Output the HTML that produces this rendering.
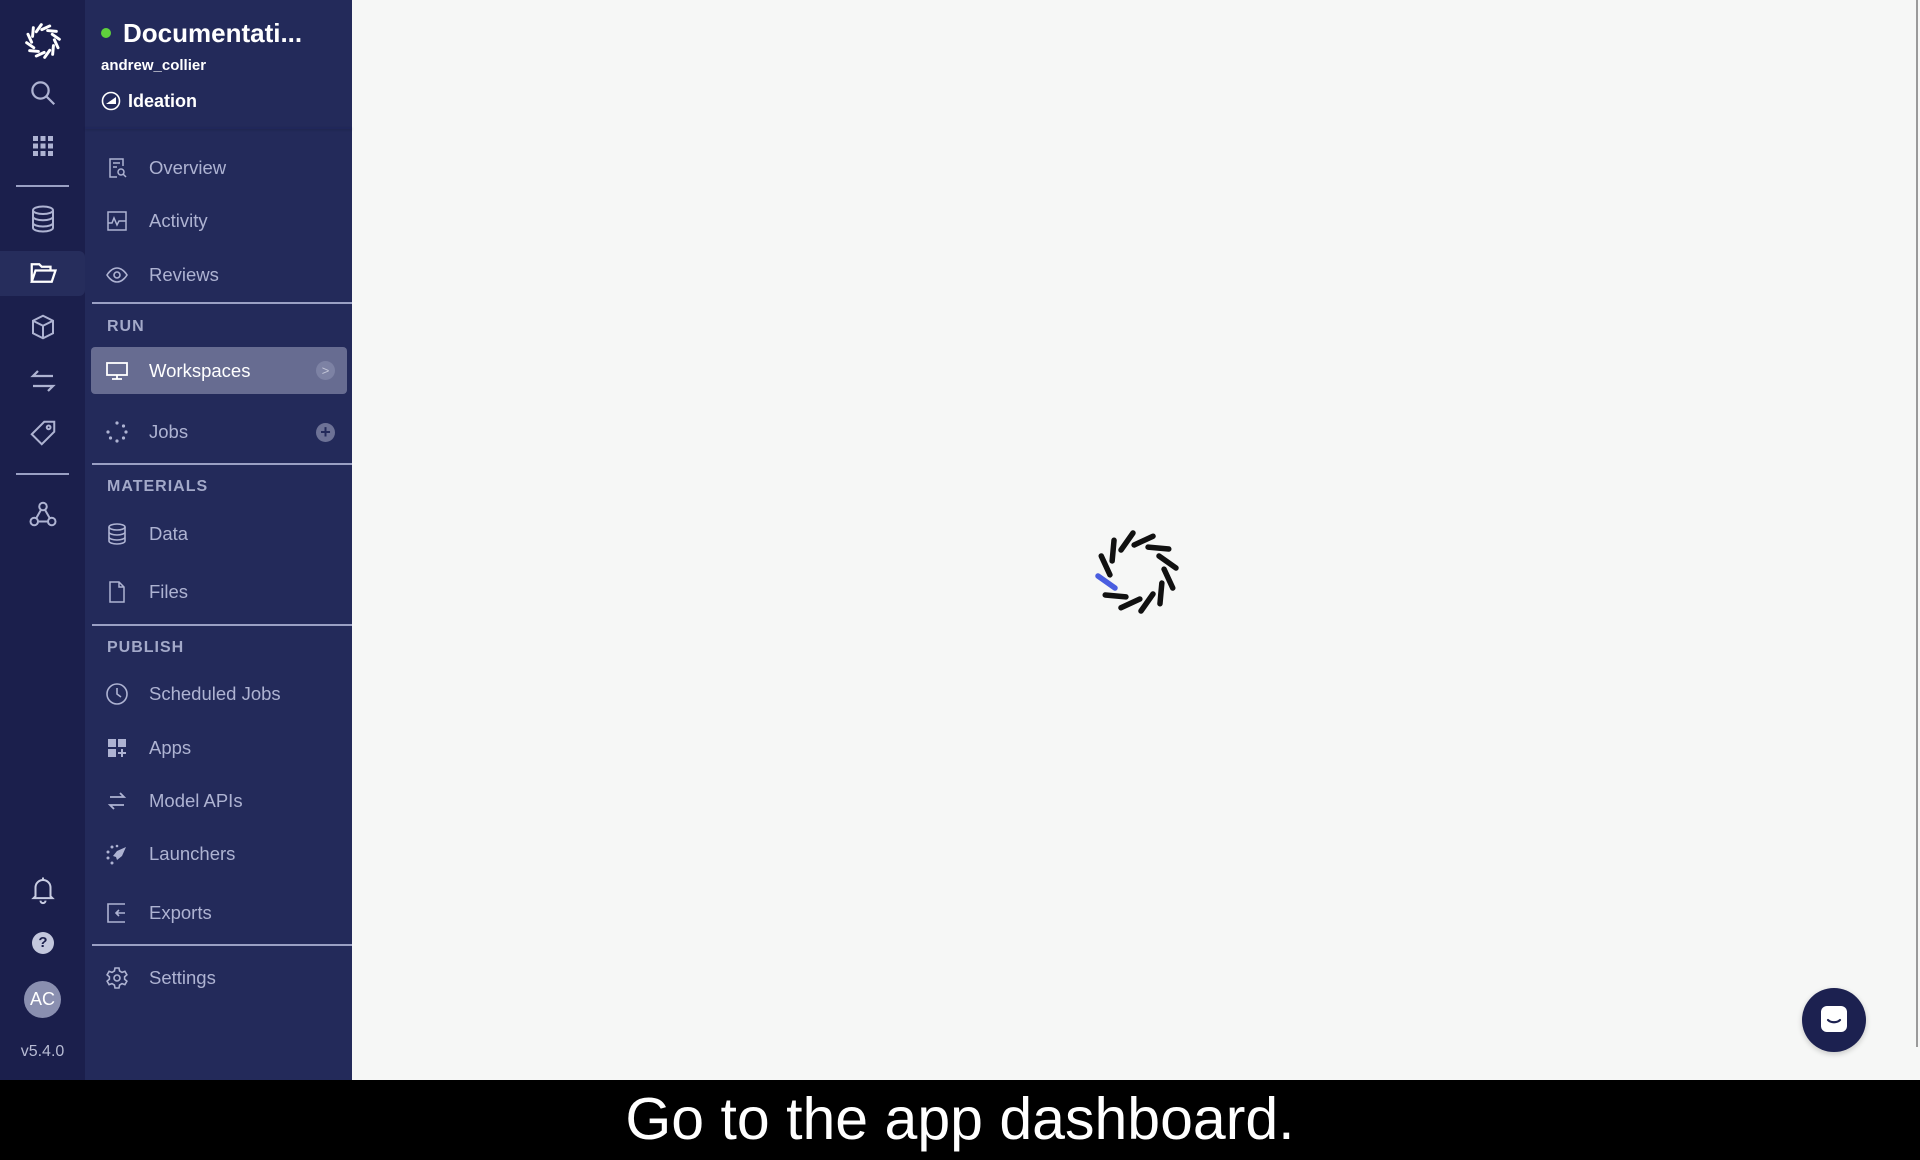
<!DOCTYPE html>
<html><head><meta charset="utf-8"><style>
*{margin:0;padding:0;box-sizing:border-box}
body{width:1920px;height:1160px;overflow:hidden;background:#f6f7f6;font-family:"Liberation Sans",sans-serif;position:relative}
.rail{position:absolute;left:0;top:0;width:85px;height:1080px;background:#1b1f4c}
.side{position:absolute;left:85px;top:0;width:267px;height:1080px;background:#232a5a}
.ic{position:absolute;left:28px;width:30px;height:30px;display:flex;align-items:center;justify-content:center}
.hr{position:absolute;left:16px;width:53px;height:2px;background:#9aa0c4}
.item{position:absolute;left:0;width:267px;height:44px;display:flex;align-items:center;color:#aeb3d2;font-size:18.5px}
.item svg{position:absolute;left:20px}
.item span{position:absolute;left:64px}
.sec{position:absolute;left:22px;color:#a3a9c9;font-size:16px;font-weight:bold;letter-spacing:1px}
.div{position:absolute;left:7px;width:260px;height:2px;background:#9aa0c4}
.cap{position:absolute;left:0;top:1080px;width:1920px;height:80px;background:#000;color:#fff;font-size:59px;text-align:center;line-height:78px}
</style></head><body>
<div class="rail">
  <svg style="position:absolute;left:22px;top:20px" width="42" height="42" viewBox="-50 -50 100 100"><g stroke="#fff" stroke-width="7" stroke-linecap="round">
<g id="l"><line x1="-16" y1="-22" x2="-4" y2="-39"/></g>
<use href="#l" transform="rotate(30)"/><use href="#l" transform="rotate(60)"/><use href="#l" transform="rotate(90)"/><use href="#l" transform="rotate(120)"/><use href="#l" transform="rotate(150)"/><use href="#l" transform="rotate(180)"/><use href="#l" transform="rotate(210)"/><use href="#l" transform="rotate(240)"/><use href="#l" transform="rotate(270)"/><use href="#l" transform="rotate(300)"/><use href="#l" transform="rotate(330)"/></g></svg>
  <svg class="ic" style="top:78px" viewBox="0 0 24 24" fill="none" stroke="#aeb3d2" stroke-width="1.8"><circle cx="10" cy="10" r="6.5"/><path d="M15 15l6 6"/></svg>
  <svg class="ic" style="top:131px" viewBox="0 0 24 24" fill="#aeb3d2"><rect x="4" y="4" width="4" height="4"/><rect x="10" y="4" width="4" height="4"/><rect x="16" y="4" width="4" height="4"/><rect x="4" y="10" width="4" height="4"/><rect x="10" y="10" width="4" height="4"/><rect x="16" y="10" width="4" height="4"/><rect x="4" y="16" width="4" height="4"/><rect x="10" y="16" width="4" height="4"/><rect x="16" y="16" width="4" height="4"/></svg>
  <div class="hr" style="top:185px"></div>
  <svg class="ic" style="top:204px" viewBox="0 0 24 24" fill="none" stroke="#aeb3d2" stroke-width="1.6"><ellipse cx="12" cy="5" rx="8" ry="3"/><path d="M4 5v14c0 1.7 3.6 3 8 3s8-1.3 8-3V5M4 10c0 1.7 3.6 3 8 3s8-1.3 8-3M4 15c0 1.7 3.6 3 8 3s8-1.3 8-3"/></svg>
  <div style="position:absolute;left:0;top:251px;width:85px;height:45px;background:#262d5c;border-radius:0 6px 6px 0"></div>
  <svg class="ic" style="top:258px" viewBox="0 0 24 24" fill="none" stroke="#fff" stroke-width="1.8"><path d="M3 19V5h6l2 2h7v3M3 19l3-9h16l-3 9z"/></svg>
  <svg class="ic" style="top:312px" viewBox="0 0 24 24" fill="none" stroke="#aeb3d2" stroke-width="1.6"><path d="M12 3l8 4v10l-8 4-8-4V7zM4 7l8 4 8-4M12 11v10"/></svg>
  <svg class="ic" style="top:366px" viewBox="0 0 24 24" fill="none" stroke="#aeb3d2" stroke-width="1.8"><path d="M20 8H4l4-4M4 16h16l-4 4"/></svg>
  <svg class="ic" style="top:418px" viewBox="0 0 24 24" fill="none" stroke="#aeb3d2" stroke-width="1.6"><path d="M13 3h8v8L11 21l-8-8z"/><circle cx="16.5" cy="7.5" r="1.5"/></svg>
  <div class="hr" style="top:473px"></div>
  <svg class="ic" style="top:499px" viewBox="0 0 24 24" fill="none" stroke="#aeb3d2" stroke-width="1.6"><circle cx="12" cy="6" r="3"/><circle cx="5" cy="18" r="3"/><circle cx="19" cy="18" r="3"/><path d="M10.5 8.5l-4 7M13.5 8.5l4 7M8 18h8"/></svg>
  <svg class="ic" style="top:875px" viewBox="0 0 24 24" fill="none" stroke="#c8cce2" stroke-width="1.6"><path d="M6 17V10a6 6 0 0112 0v7l1.5 1.5h-15zM10 20.5a2 2 0 004 0M12 2v2"/></svg>
  <div style="position:absolute;left:32px;top:932px;width:22px;height:22px;border-radius:50%;background:#c3c7dd;color:#1b1f4c;font-size:15px;font-weight:bold;text-align:center;line-height:22px">?</div>
  <div style="position:absolute;left:24px;top:981px;width:37px;height:37px;border-radius:50%;background:#8a8fb0;color:#fff;font-size:18px;text-align:center;line-height:37px">AC</div>
  <div style="position:absolute;left:0;top:1043px;width:85px;text-align:center;color:#b7bbd3;font-size:16px">v5.4.0</div>
</div>
<div class="side">
  <div style="position:absolute;left:16px;top:28px;width:10px;height:10px;border-radius:50%;background:#5fd13c"></div>
  <div style="position:absolute;left:38px;top:18px;color:#fff;font-size:26px;font-weight:bold">Documentati...</div>
  <div style="position:absolute;left:16px;top:57px;color:#fff;font-size:15px;font-weight:bold">andrew_collier</div>
  <svg style="position:absolute;left:16px;top:91px" width="20" height="20" viewBox="0 0 20 20"><circle cx="10" cy="10" r="8.5" fill="none" stroke="#fff" stroke-width="1.6"/><path d="M5 13h10V6z" fill="#fff"/></svg>
  <div style="position:absolute;left:43px;top:91px;color:#fff;font-size:18px;font-weight:bold">Ideation</div>
  <div style="position:absolute;left:0;top:127px;width:267px;height:2px;background:#20275a;box-shadow:0 1px 2px rgba(0,0,0,.15)"></div>

  <div class="item" style="top:146px"><svg width="24" height="24" viewBox="0 0 24 24" fill="none" stroke="#aeb3d2" stroke-width="1.5"><path d="M18 10V3H5v18h7M8 7h7M8 11h4"/><circle cx="16" cy="16" r="3"/><path d="M18 18l3 3"/></svg><span>Overview</span></div>
  <div class="item" style="top:199px"><svg width="24" height="24" viewBox="0 0 24 24" fill="none" stroke="#aeb3d2" stroke-width="1.5"><rect x="3" y="3" width="18" height="18"/><path d="M3 14h4l2-5 3 7 2-4h7"/></svg><span>Activity</span></div>
  <div class="item" style="top:253px"><svg width="24" height="24" viewBox="0 0 24 24" fill="none" stroke="#aeb3d2" stroke-width="1.6"><path d="M2 12s4-7 10-7 10 7 10 7-4 7-10 7S2 12 2 12z"/><circle cx="12" cy="12" r="3"/></svg><span>Reviews</span></div>
  <div class="div" style="top:302px"></div>
  <div class="sec" style="top:318px">RUN</div>
  <div style="position:absolute;left:6px;top:347px;width:256px;height:47px;background:#676c91;border-radius:4px"></div>
  <div class="item" style="top:347px;color:#fff;height:47px"><svg width="24" height="24" viewBox="0 0 24 24" fill="none" stroke="#fff" stroke-width="1.8"><rect x="2" y="4" width="20" height="12"/><path d="M12 16v4M7 20h10"/></svg><span>Workspaces</span>
  <div style="position:absolute;left:231px;top:14px;width:19px;height:19px;border-radius:50%;background:#7d82a4;color:#c3c6d8;font-size:13px;text-align:center;line-height:19px">&gt;</div></div>
  <div class="item" style="top:410px"><svg width="24" height="24" viewBox="0 0 24 24" fill="#aeb3d2"><circle cx="12" cy="3" r="1.6"/><circle cx="18.5" cy="6" r="1.6"/><circle cx="21" cy="12" r="1.6"/><circle cx="18.5" cy="18" r="1.6"/><circle cx="12" cy="21" r="1.6"/><circle cx="5.5" cy="18" r="1.6"/><circle cx="3" cy="12" r="1.6"/></svg><span>Jobs</span>
  <div style="position:absolute;left:231px;top:13px;width:19px;height:19px;border-radius:50%;background:#6d7296;color:#232a5a;font-size:18px;font-weight:bold;text-align:center;line-height:19px">+</div></div>
  <div class="div" style="top:463px"></div>
  <div class="sec" style="top:478px">MATERIALS</div>
  <div class="item" style="top:512px"><svg width="24" height="24" viewBox="0 0 24 24" fill="none" stroke="#aeb3d2" stroke-width="1.6"><ellipse cx="12" cy="5" rx="8" ry="3"/><path d="M4 5v14c0 1.7 3.6 3 8 3s8-1.3 8-3V5M4 10c0 1.7 3.6 3 8 3s8-1.3 8-3M4 15c0 1.7 3.6 3 8 3s8-1.3 8-3"/></svg><span>Data</span></div>
  <div class="item" style="top:570px"><svg width="24" height="24" viewBox="0 0 24 24" fill="none" stroke="#aeb3d2" stroke-width="1.5"><path d="M5 2h9l5 5v15H5zM14 2v5h5"/></svg><span>Files</span></div>
  <div class="div" style="top:624px"></div>
  <div class="sec" style="top:639px">PUBLISH</div>
  <div class="item" style="top:672px"><svg width="24" height="24" viewBox="0 0 24 24" fill="none" stroke="#aeb3d2" stroke-width="1.6"><circle cx="12" cy="12" r="10"/><path d="M12 6v6l4 3"/></svg><span>Scheduled Jobs</span></div>
  <div class="item" style="top:726px"><svg width="24" height="24" viewBox="0 0 24 24" fill="#aeb3d2"><rect x="3" y="3" width="8" height="8"/><rect x="13" y="3" width="8" height="8"/><rect x="3" y="13" width="8" height="8"/><path d="M16 13h2v3h3v2h-3v3h-2v-3h-3v-2h3z"/></svg><span>Apps</span></div>
  <div class="item" style="top:779px"><svg width="24" height="24" viewBox="0 0 24 24" fill="none" stroke="#aeb3d2" stroke-width="1.8"><path d="M5 8h14l-4-4M19 16H5l4 4"/></svg><span>Model APIs</span></div>
  <div class="item" style="top:832px"><svg width="24" height="24" viewBox="0 0 24 24" fill="#aeb3d2"><circle cx="3" cy="10" r="1.5"/><circle cx="7" cy="5" r="1.5"/><circle cx="3" cy="16" r="1.5"/><circle cx="7" cy="21" r="1.5"/><circle cx="12" cy="4" r="1.3"/><path d="M21 5l-9 4-4 5 3 1 1 3 5-4z"/></svg><span>Launchers</span></div>
  <div class="item" style="top:891px"><svg width="24" height="24" viewBox="0 0 24 24" fill="none" stroke="#aeb3d2" stroke-width="1.6"><path d="M20 3H3v18h17M20 12h-9M14 9l-3 3 3 3"/></svg><span>Exports</span></div>
  <div class="div" style="top:944px"></div>
  <div class="item" style="top:956px"><svg width="24" height="24" viewBox="0 0 24 24" fill="none" stroke="#aeb3d2" stroke-width="1.6"><circle cx="12" cy="12" r="3"/><path d="M10 2h4l.6 3 2.4 1.4 2.9-1 2 3.4-2.3 2v2.4l2.3 2-2 3.4-2.9-1L14.6 19l-.6 3h-4l-.6-3L7 17.6l-2.9 1-2-3.4 2.3-2v-2.4l-2.3-2 2-3.4 2.9 1L9.4 5z"/></svg><span>Settings</span></div>
</div>
<div style="position:absolute;left:1916px;top:0;width:2px;height:1047px;background:#9a9a9a"></div>
<svg style="position:absolute;left:1087px;top:522px" width="100" height="100" viewBox="-50 -50 100 100"><g stroke="#111" stroke-width="5.5" stroke-linecap="round">
<g id="d"><line x1="-16" y1="-22" x2="-4" y2="-39"/></g>
<use href="#d" transform="rotate(30)"/><use href="#d" transform="rotate(60)"/><use href="#d" transform="rotate(90)"/><use href="#d" transform="rotate(120)"/><use href="#d" transform="rotate(150)"/><use href="#d" transform="rotate(180)"/><use href="#d" transform="rotate(210)"/><use href="#d" transform="rotate(240)"/><use href="#d" transform="rotate(300)"/><use href="#d" transform="rotate(330)"/></g>
<line x1="-16" y1="-22" x2="-4" y2="-39" stroke="#4a5ee0" stroke-width="5.5" stroke-linecap="round" transform="rotate(-90)"/></svg>
<div style="position:absolute;left:1802px;top:988px;width:64px;height:64px;border-radius:50%;background:#1c2150;box-shadow:0 2px 6px rgba(0,0,0,.2)">
<svg style="position:absolute;left:18px;top:17px" width="28" height="30" viewBox="0 0 28 30"><rect x="1" y="1" width="26" height="26" rx="6" fill="#fff"/><path d="M8 15c3 3 9 3 12 0" stroke="#1c2150" stroke-width="2.2" fill="none" stroke-linecap="round"/></svg></div>
<div class="cap">Go to the app dashboard.</div>
</body></html>
